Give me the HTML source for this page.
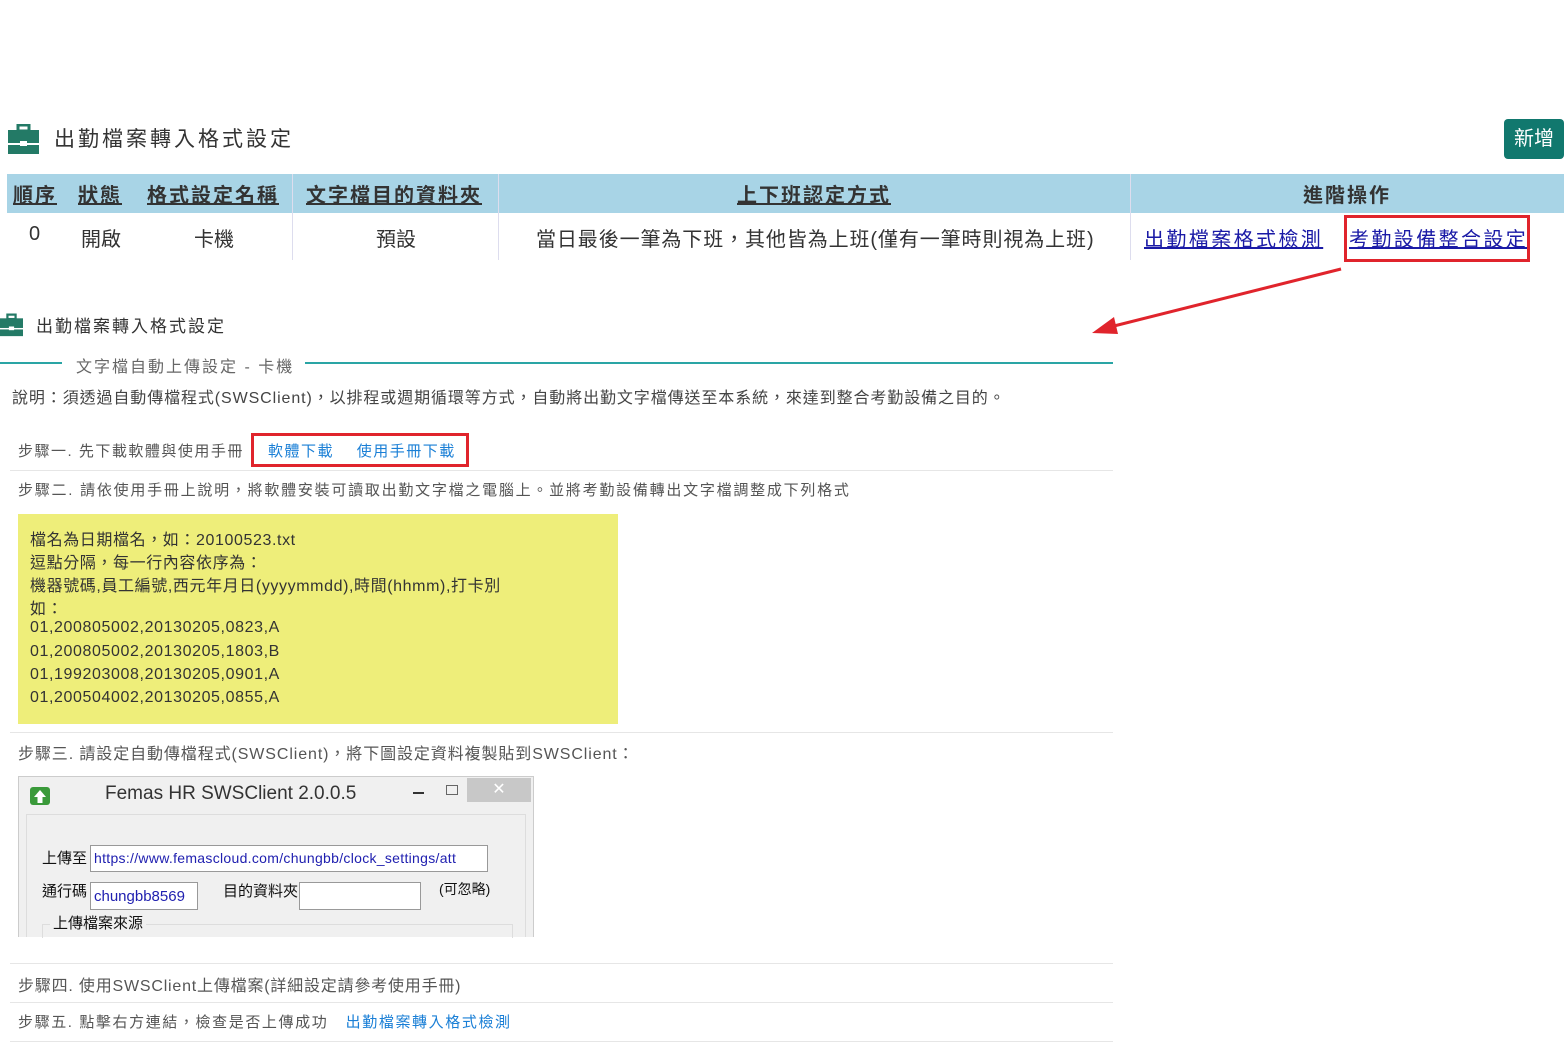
<!DOCTYPE html>
<html><head><meta charset="utf-8"><style>
*{margin:0;padding:0;box-sizing:border-box}
body{width:1568px;height:1043px;background:#fff;position:relative;overflow:hidden;font-family:"Liberation Sans","Noto Sans CJK TC",sans-serif;color:#333}
.a{position:absolute;white-space:nowrap}
.hd{background:#a8d4e6;position:absolute;top:174px;height:39px}
.th{position:absolute;top:179px;font-size:20px;font-weight:600;color:#333;text-decoration:underline;letter-spacing:2px}
.td{position:absolute;top:223px;font-size:20px;color:#333}
.vl{position:absolute;width:1px;background:#dde;top:174px;height:86px}
.sep{position:absolute;left:10px;width:1103px;height:1px;background:#e6e6e6}
.st{position:absolute;left:18px;font-size:15px;color:#555;letter-spacing:1.5px}
.yl{position:absolute;left:30px;font-size:16px;color:#333;letter-spacing:0.6px}
a{color:#1a7fd6;text-decoration:none}
</style></head><body>
<svg class="a" style="left:8px;top:124px" width="31" height="30" viewBox="0 0 31 30"><rect x="10" y="1" width="11" height="6" fill="none" stroke="#237a66" stroke-width="3"/><rect x="0" y="6" width="31" height="13" fill="#237a66"/><rect x="0" y="21" width="31" height="9" fill="#237a66"/><rect x="12" y="17" width="7" height="5" fill="#fff"/></svg>
<div class="a" style="left:54px;top:123px;font-size:21px;color:#333;letter-spacing:3px">出勤檔案轉入格式設定</div>
<div class="a" style="left:1504px;top:119px;width:60px;height:40px;background:#11786e;border-radius:4px;color:#fff;font-size:20px;line-height:40px;text-align:center">新增</div>
<div class="hd" style="left:7px;width:1557px"></div>
<div class="vl" style="left:292px"></div><div class="vl" style="left:498px"></div><div class="vl" style="left:1130px"></div>
<div class="th" style="left:13px">順序</div>
<div class="th" style="left:78px">狀態</div>
<div class="th" style="left:147px">格式設定名稱</div>
<div class="th" style="left:306px">文字檔目的資料夾</div>
<div class="th" style="left:737px">上下班認定方式</div>
<div class="th" style="left:1303px;text-decoration:none">進階操作</div>
<div class="td" style="left:29px">0</div>
<div class="td" style="left:81px">開啟</div>
<div class="td" style="left:194px">卡機</div>
<div class="td" style="left:376px">預設</div>
<div class="td" style="left:536px;letter-spacing:0.9px">當日最後一筆為下班，其他皆為上班(僅有一筆時則視為上班)</div>
<div class="td" style="left:1144px;color:#1a1aa6;text-decoration:underline;letter-spacing:2.4px">出勤檔案格式檢測</div>
<div class="td" style="left:1349px;color:#1a1aa6;text-decoration:underline;letter-spacing:2.4px">考勤設備整合設定</div>
<div class="a" style="left:1344px;top:215px;width:186px;height:47px;border:3px solid #e0242c"></div>
<svg class="a" style="left:0;top:0" width="1568" height="400"><line x1="1341" y1="269" x2="1110" y2="327" stroke="#e0242c" stroke-width="3"/><polygon points="1092,333 1114,317 1118,334" fill="#e0242c"/></svg>
<svg class="a" style="left:0px;top:313px" width="23" height="24" viewBox="0 0 31 30"><rect x="10" y="1" width="11" height="6" fill="none" stroke="#237a66" stroke-width="3"/><rect x="0" y="6" width="31" height="13" fill="#237a66"/><rect x="0" y="21" width="31" height="9" fill="#237a66"/><rect x="12" y="17" width="7" height="5" fill="#fff"/></svg>
<div class="a" style="left:36px;top:312px;font-size:17px;letter-spacing:2px">出勤檔案轉入格式設定</div>
<div class="a" style="left:0;top:362px;width:62px;height:2px;background:#2aa5a5"></div>
<div class="a" style="left:305px;top:362px;width:808px;height:2px;background:#2aa5a5"></div>
<div class="a" style="left:76px;top:353px;font-size:16px;color:#666;letter-spacing:2px">文字檔自動上傳設定 - 卡機</div>
<div class="a" style="left:12px;top:384px;font-size:16px;color:#444;letter-spacing:0.9px">說明：須透過自動傳檔程式(SWSClient)，以排程或週期循環等方式，自動將出勤文字檔傳送至本系統，來達到整合考勤設備之目的。</div>
<div class="st" style="top:440px">步驟一. 先下載軟體與使用手冊</div>
<div class="a" style="left:268px;top:440px;font-size:15px;letter-spacing:1.5px"><a>軟體下載</a>&nbsp;&nbsp;&nbsp;&nbsp;<a>使用手冊下載</a></div>
<div class="a" style="left:251px;top:433px;width:218px;height:34px;border:3px solid #e0242c"></div>
<div class="sep" style="top:470px"></div>
<div class="st" style="top:479px;letter-spacing:1.75px">步驟二. 請依使用手冊上說明，將軟體安裝可讀取出勤文字檔之電腦上。並將考勤設備轉出文字檔調整成下列格式</div>
<div class="a" style="left:18px;top:514px;width:600px;height:210px;background:#eeee7a"></div>
<div class="yl" style="top:526px">檔名為日期檔名，如：20100523.txt</div>
<div class="yl" style="top:549px">逗點分隔，每一行內容依序為：</div>
<div class="yl" style="top:572px">機器號碼,員工編號,西元年月日(yyyymmdd),時間(hhmm),打卡別</div>
<div class="yl" style="top:595px">如：</div>
<div class="yl" style="top:619px">01,200805002,20130205,0823,A</div>
<div class="yl" style="top:643px">01,200805002,20130205,1803,B</div>
<div class="yl" style="top:666px">01,199203008,20130205,0901,A</div>
<div class="yl" style="top:689px">01,200504002,20130205,0855,A</div>
<div class="sep" style="top:732px"></div>
<div class="st" style="top:740px;font-size:16px;letter-spacing:0.9px">步驟三. 請設定自動傳檔程式(SWSClient)，將下圖設定資料複製貼到SWSClient：</div>
<div class="a" style="left:18px;top:776px;width:516px;height:161px;background:#f0f0f0;border:1px solid #ccc;border-bottom:none"></div>
<svg class="a" style="left:30px;top:787px" width="20" height="18" viewBox="0 0 20 18"><rect width="20" height="18" rx="3" fill="#3a9a3a"/><path d="M10 3 L16 10 H12.5 V16 H7.5 V10 H4 Z" fill="#fff"/></svg>
<div class="a" style="left:105px;top:783px;font-size:19px;color:#333">Femas HR SWSClient 2.0.0.5</div>
<div class="a" style="left:413px;top:792px;width:11px;height:2px;background:#333"></div>
<div class="a" style="left:446px;top:785px;width:12px;height:10px;border:1px solid #666"></div>
<div class="a" style="left:467px;top:778px;width:64px;height:24px;background:#c8c8c8;color:#fff;font-size:16px;text-align:center;line-height:24px">✕</div>
<div class="a" style="left:26px;top:814px;width:500px;height:123px;border:1px solid #ddd;border-bottom:none;background:#f0f0f0"></div>
<div class="a" style="left:42px;top:847px;font-size:15px;color:#111">上傳至</div>
<div class="a" style="left:90px;top:845px;width:398px;height:27px;background:#fff;border:1px solid #999;color:#2020b0;font-size:14px;line-height:25px;padding-left:3px;letter-spacing:0.3px">https://www.femascloud.com/chungbb/clock_settings/att</div>
<div class="a" style="left:42px;top:880px;font-size:15px;color:#111">通行碼</div>
<div class="a" style="left:90px;top:882px;width:108px;height:28px;background:#fff;border:1px solid #999;color:#2020b0;font-size:15px;line-height:28px;padding-left:3px">chungbb8569</div>
<div class="a" style="left:223px;top:880px;font-size:15px;color:#111">目的資料夾</div>
<div class="a" style="left:299px;top:882px;width:122px;height:28px;background:#fff;border:1px solid #999"></div>
<div class="a" style="left:439px;top:879px;font-size:14px;color:#111">(可忽略)</div>
<div class="a" style="left:42px;top:924px;width:471px;height:14px;border:1px solid #ddd;border-bottom:none"></div>
<div class="a" style="left:50px;top:912px;font-size:15px;color:#111;background:#f0f0f0;padding:0 3px">上傳檔案來源</div>
<div class="sep" style="top:963px"></div>
<div class="st" style="top:972px;font-size:16px;letter-spacing:0.8px">步驟四. 使用SWSClient上傳檔案(詳細設定請參考使用手冊)</div>
<div class="sep" style="top:1002px"></div>
<div class="st" style="top:1011px;letter-spacing:1.6px">步驟五. 點擊右方連結，檢查是否上傳成功&nbsp;&nbsp;&nbsp;<a>出勤檔案轉入格式檢測</a></div>
<div class="sep" style="top:1041px"></div>
</body></html>
